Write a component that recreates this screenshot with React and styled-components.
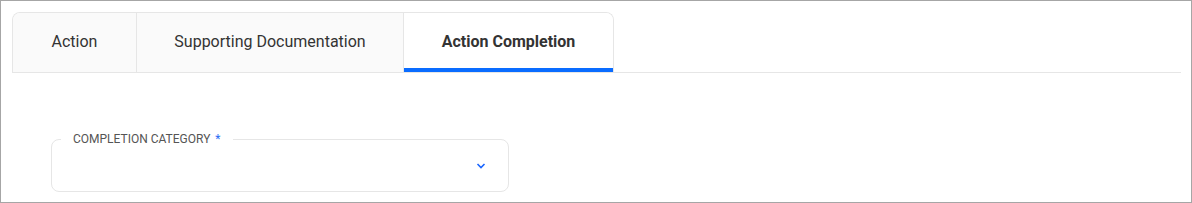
import React from "react";
import styled, { createGlobalStyle } from "styled-components";

const Global = createGlobalStyle`
  html, body { margin: 0; padding: 0; background: #fff; }
  body { font-family: Roboto, "Liberation Sans", sans-serif; }
  * { box-sizing: border-box; }
`;

const Frame = styled.div`
  width: 1192px;
  height: 203px;
  border: 1px solid #a6a6a6;
  padding: 11px 10px 0 11px;
  background: #fff;
`;

const TabList = styled.div`
  display: flex;
  border-bottom: 1px solid #e6e6e6;
`;

const TabGroup = styled.div`
  display: flex;
  border: 1px solid #e6e6e6;
  border-bottom: none;
  border-radius: 8px 8px 0 0;
  overflow: hidden;
`;

const Tab = styled.button`
  position: relative;
  height: 59px;
  width: ${(p) => p.$w}px;
  border: none;
  border-left: ${(p) => (p.$first ? "none" : "1px solid #e6e6e6")};
  background: ${(p) => (p.$active ? "#fff" : "#fafafa")};
  font-family: Roboto, "Liberation Sans", sans-serif;
  font-size: 16px;
  font-weight: ${(p) => (p.$active ? 700 : 400)};
  color: #333;
  padding: 0 0 2px;
  cursor: pointer;
  &::after {
    content: "";
    display: ${(p) => (p.$active ? "block" : "none")};
    position: absolute;
    left: 0;
    right: 0;
    bottom: 0;
    height: 4px;
    background: #0a6cff;
  }
`;

const Body = styled.div`
  padding: 66px 0 0 39px;
`;

const Field = styled.fieldset`
  margin: 0;
  width: 458px;
  height: 53px;
  border: 1px solid #e6e6e6;
  border-radius: 8px;
  padding: 0 22px 0 10px;
  display: flex;
  align-items: center;
  justify-content: flex-end;
  position: relative;
`;

const Legend = styled.legend`
  position: absolute;
  top: -9px;
  left: 9px;
  background: #fff;
  padding: 0 12px;
  font-size: 12px;
  color: #555;
  text-transform: uppercase;
  line-height: 16px;
`;

const Star = styled.span`
  color: #2a6df4;
  margin-left: 5px;
`;

const Chevron = styled.svg`
  width: 10px;
  height: 10px;
  margin-top: 1px;
`;

export default function App() {
  return (
    <>
      <Global />
      <Frame>
        <TabList>
          <TabGroup>
            <Tab $first $w={123}>Action</Tab>
            <Tab $w={267}>Supporting Documentation</Tab>
            <Tab $active $w={210}>Action Completion</Tab>
          </TabGroup>
        </TabList>
        <Body>
          <Field>
            <Legend>
              Completion Category<Star>*</Star>
            </Legend>
            <Chevron viewBox="0 0 10 10">
              <polyline points="1.5,3 5,6.5 8.5,3" fill="none" stroke="#1a66ff" strokeWidth="1.6" />
            </Chevron>
          </Field>
        </Body>
      </Frame>
    </>
  );
}
